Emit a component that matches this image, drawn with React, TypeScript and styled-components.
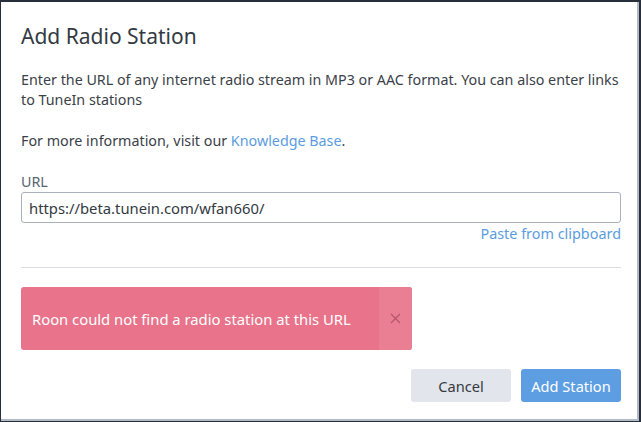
import styled, { createGlobalStyle } from "styled-components";

const GlobalStyle = createGlobalStyle`
  html, body {
    margin: 0;
    padding: 0;
    background: #27303a;
  }
  body {
    font-family: "Noto Sans", "Open Sans", sans-serif;
  }
`;

const Dialog = styled.div`
  box-sizing: border-box;
  margin: 2px 0 0 1px;
  width: 638px;
  height: 419px;
  background: #ffffff;
  border-right: 2px solid #b3bbc6;
  border-bottom: 2px solid #b3bbc6;
  padding: 0 16px 0 20px;
  display: flex;
  flex-direction: column;
`;

const Title = styled.h1`
  margin: 20px 0 0;
  font-size: 21px;
  font-weight: 400;
  line-height: 28px;
  color: #333a42;
`;

const Text = styled.p`
  margin: 21px 0 0;
  font-size: 14.3px;
  line-height: 20px;
  color: #3b4148;

  &:first-of-type {
    margin-top: 20px;
  }
`;

const Link = styled.a`
  color: #5b9ce0;
  text-decoration: none;
  cursor: pointer;
`;

const Label = styled.label`
  margin-top: 21px;
  font-size: 14.3px;
  line-height: 20px;
  color: #5a6470;
`;

const Input = styled.input`
  box-sizing: border-box;
  width: 100%;
  height: 31px;
  padding: 0 7px;
  border: 1px solid #a9b1bc;
  border-radius: 3px;
  font-family: inherit;
  font-size: 14.8px;
  color: #333a42;
  outline: none;
`;

const PasteRow = styled.div`
  display: flex;
  justify-content: flex-end;
  font-size: 14.4px;
  line-height: 22px;
`;

const Divider = styled.hr`
  margin: 22px 0 0;
  border: none;
  border-top: 1px solid #dadde2;
`;

const ErrorBanner = styled.div`
  margin-top: 19px;
  align-self: flex-start;
  display: flex;
  height: 63px;
  border-radius: 3px;
  overflow: hidden;
  background: #e8738a;
  color: #ffffff;
`;

const ErrorText = styled.div`
  display: flex;
  align-items: center;
  width: 347px;
  padding: 0 0 0 11px;
  font-size: 14.8px;
`;

const CloseButton = styled.button`
  width: 33px;
  border: none;
  padding: 0;
  background: #ea7f94;
  color: #b4566a;
  display: flex;
  align-items: center;
  justify-content: center;
  cursor: pointer;
`;

const Footer = styled.div`
  margin-top: 19px;
  display: flex;
  justify-content: flex-end;
  gap: 10px;
`;

const Button = styled.button<{ $primary?: boolean }>`
  width: 100px;
  height: 33px;
  border: none;
  border-radius: 3px;
  font-family: inherit;
  font-size: 14.6px;
  background: ${(p) => (p.$primary ? "#5d9ee3" : "#e2e5ec")};
  color: ${(p) => (p.$primary ? "#ffffff" : "#343a40")};
  cursor: pointer;
`;

export default function App() {
  return (
    <>
      <GlobalStyle />
      <Dialog>
        <Title>Add Radio Station</Title>
        <Text>
          Enter the URL of any internet radio stream in MP3 or AAC format. You
          can also enter links to TuneIn stations
        </Text>
        <Text>
          For more information, visit our <Link>Knowledge Base</Link>.
        </Text>
        <Label>URL</Label>
        <Input defaultValue="https://beta.tunein.com/wfan660/" />
        <PasteRow>
          <Link>Paste from clipboard</Link>
        </PasteRow>
        <Divider />
        <ErrorBanner>
          <ErrorText>Roon could not find a radio station at this URL</ErrorText>
          <CloseButton aria-label="Close">
            <svg width="11" height="11" viewBox="0 0 11 11">
              <path d="M1 1 L10 10 M10 1 L1 10" stroke="currentColor" strokeWidth="1.2" />
            </svg>
          </CloseButton>
        </ErrorBanner>
        <Footer>
          <Button>Cancel</Button>
          <Button $primary>Add Station</Button>
        </Footer>
      </Dialog>
    </>
  );
}
